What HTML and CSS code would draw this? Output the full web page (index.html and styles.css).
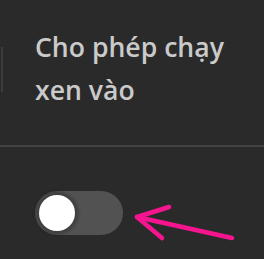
FILE: index.html
```html
<!DOCTYPE html>
<html lang="vi">
<head>
<meta charset="utf-8">
<link rel="stylesheet" href="styles.css">
</head>
<body>
<div class="page">
  <div class="header">
    <div class="rail"></div>
    <div class="title">Cho phép chạy<br>xen vào</div>
  </div>
  <div class="divider"></div>
  <div class="control">
    <div class="toggle"><div class="knob"></div></div>
    <svg class="arrow" width="264" height="259" viewBox="0 0 264 259">
      <g fill="none" stroke="#f7158f" stroke-width="4.5" stroke-linecap="round" stroke-linejoin="round">
        <path d="M232 238 L137 217"/>
        <path d="M169 207 L137 217 L162 238"/>
      </g>
    </svg>
  </div>
</div>
</body>
</html>
```

FILE: styles.css
```css
html, body {
  margin: 0;
  padding: 0;
  background: #2a2a2a;
}
.page {
  position: relative;
  width: 264px;
  height: 259px;
  overflow: hidden;
  background: #2a2a2a;
}
.header {
  display: flex;
  align-items: flex-start;
  height: 145px;
}
.rail {
  width: 2px;
  height: 45px;
  margin-top: 47px;
  margin-left: 1px;
  background: #3c3c3c;
}
.title {
  margin-left: 32px;
  margin-top: 26px;
  font-family: "Open Sans", "Noto Sans", sans-serif;
  font-weight: 600;
  font-size: 26.6px;
  line-height: 43px;
  color: #cacaca;
}
.divider {
  height: 2px;
  background: #434343;
}
.control {
  padding: 44px 0 0 35px;
}
.toggle {
  width: 88px;
  height: 44px;
  border-radius: 22px;
  background: #525252;
  box-sizing: border-box;
  padding: 4px;
}
.knob {
  width: 36px;
  height: 36px;
  border-radius: 50%;
  background: #ffffff;
  box-shadow: 0 0 3px 4px rgba(0, 0, 0, 0.2);
}
.arrow {
  position: absolute;
  left: 0;
  top: 0;
  pointer-events: none;
}
```
